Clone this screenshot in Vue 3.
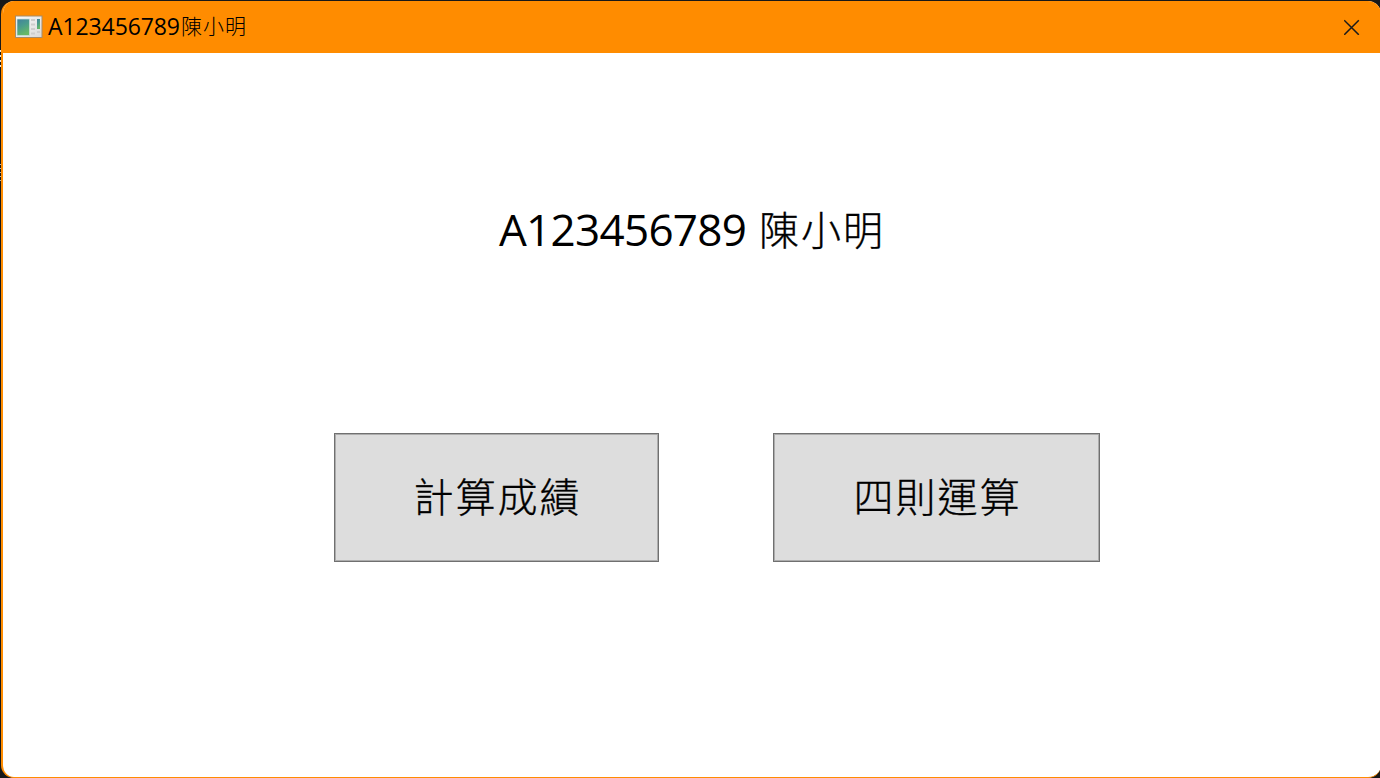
<script setup>
const id = 'A123456789'
const name = '陳小明'
const actions = ['計算成績', '四則運算']
</script>

<template>
  <div class="desktop">
    <main class="window">
      <header class="titlebar">
        <svg class="app-icon" width="28" height="24" viewBox="0 0 28 24">
          <defs>
            <linearGradient id="pane" x1="0" y1="0" x2="0.4" y2="1">
              <stop offset="0" stop-color="#427f9e" />
              <stop offset="0.5" stop-color="#4a9c8c" />
              <stop offset="1" stop-color="#67b866" />
            </linearGradient>
            <linearGradient id="frame" x1="0" y1="0" x2="1" y2="1">
              <stop offset="0" stop-color="#fafafa" />
              <stop offset="1" stop-color="#d9d9d9" />
            </linearGradient>
          </defs>
          <rect x="0.5" y="1" width="26.5" height="21.5" fill="url(#frame)" stroke="#a58b6b" />
          <rect x="2" y="4" width="12.5" height="16.5" fill="url(#pane)" stroke="#cde3df" stroke-width="0.7" />
          <path d="M16 5h4M16 9.5h4M16 14h4M16 18.5h4M22 17h3" stroke="#cdcdcd" stroke-width="2" />
          <rect x="22" y="4" width="3" height="10" fill="url(#pane)" />
        </svg>
        <h1 class="caption"><span class="latin">{{ id }}</span><span class="han">{{ name }}</span></h1>
        <button class="close" aria-label="Close">
          <svg width="16" height="16" viewBox="0 0 16 16">
            <path d="M.2 1.2 14.8 15.8M14.8 1.2.2 15.8" stroke="#1a1a1a" stroke-width="1.5" fill="none" />
          </svg>
        </button>
      </header>
      <p class="student"><span class="latin">{{ id }}</span><span class="han">{{ name }}</span></p>
      <div class="actions">
        <button v-for="action in actions" :key="action" class="action"><span>{{ action }}</span></button>
      </div>
    </main>
  </div>
</template>

<style>
body {
  margin: 0;
  overflow: hidden;
}
</style>

<style scoped>
.desktop {
  box-sizing: border-box;
  width: 1380px;
  height: 778px;
  padding: 1px 0 0 1px;
  background:
    repeating-linear-gradient(#e8e8e8 0 2px, #181818 2px 5px) 0 50px / 1px 17px no-repeat,
    repeating-linear-gradient(#b8b8b8 0 1px, #181818 1px 4px) 0 164px / 1px 17px no-repeat,
    #181818;
  font-family: "Open Sans", "Noto Sans CJK TC", sans-serif;
  color: #000;
}
.window {
  box-sizing: border-box;
  width: 1380px;
  height: 777px;
  border: solid #ff8c00;
  border-width: 0 0 1px 2px;
  border-radius: 13px;
  background: #fff;
  overflow: hidden;
}
.titlebar {
  display: flex;
  align-items: center;
  box-sizing: border-box;
  height: 52px;
  padding: 0 21px 0 12px;
  background: #ff8c00;
}
.app-icon {
  flex: none;
}
.caption {
  display: flex;
  align-items: center;
  flex: 1;
  margin: 0 0 2px 5px;
  font-weight: 400;
  line-height: 50px;
}
.han {
  font-family: "Noto Sans CJK TC", sans-serif;
  font-weight: 300;
}
.caption .latin {
  width: 133px;
  font-size: 23px;
  letter-spacing: -0.1px;
}
.caption .han {
  margin-top: -3px;
  font-size: 21px;
  letter-spacing: 1px;
}
.close {
  display: flex;
  padding: 0;
  border: 0;
  background: none;
}
.student {
  display: flex;
  align-items: center;
  height: 60px;
  margin: 146px 0 0 496px;
  line-height: 60px;
}
.student .latin {
  width: 260px;
  font-size: 44px;
  letter-spacing: -0.7px;
}
.student .han {
  margin-top: -3px;
  font-size: 40px;
  letter-spacing: 2px;
  -webkit-text-stroke: 0.35px #000;
}
.actions {
  display: flex;
  gap: 114px;
  margin: 174px 0 0 331px;
}
.action {
  box-sizing: border-box;
  width: 325px;
  height: 129px;
  padding: 0 0 5px 2px;
  border: 1px solid #707070;
  box-shadow: inset 0 0 0 1px #acacac;
  background: #ddd;
  color: #000;
  font: 300 40px/122px "Noto Sans CJK TC", sans-serif;
  letter-spacing: 2px;
  -webkit-text-stroke: 0.35px #000;
}
.action:last-child {
  width: 327px;
}
</style>
